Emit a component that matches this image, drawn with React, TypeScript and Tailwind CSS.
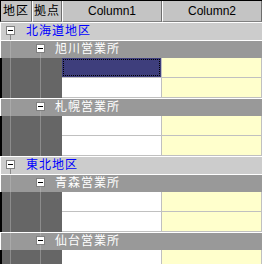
import React from 'react';

type Row =
  | { kind: 'region'; label: string }
  | { kind: 'office'; label: string; first: boolean }
  | { kind: 'data'; selected?: boolean };

const ROWS: Row[] = [
  { kind: 'region', label: '北海道地区' },
  { kind: 'office', label: '旭川営業所', first: true },
  { kind: 'data', selected: true },
  { kind: 'data' },
  { kind: 'office', label: '札幌営業所', first: false },
  { kind: 'data' },
  { kind: 'data' },
  { kind: 'region', label: '東北地区' },
  { kind: 'office', label: '青森営業所', first: true },
  { kind: 'data' },
  { kind: 'data' },
  { kind: 'office', label: '仙台営業所', first: false },
  { kind: 'data' },
];

const JP = "font-['Liberation_Sans','Noto_Sans_CJK_JP',sans-serif]";

// small "minus" expander box of the tree
const Expander = ({ x }: { x: number }) => (
  <>
    <rect x={x + 0.5} y={3.5} width={8} height={8} fill="#ffffff" stroke="#808080" />
    <line x1={x + 2} y1={7.5} x2={x + 7} y2={7.5} stroke="#000000" />
  </>
);

const HeaderCell = ({ w, children, first }: { w: string; children: React.ReactNode; first?: boolean }) => (
  <div
    className={`${w} h-full flex items-center justify-center bg-[#c4c4c4] border-r border-b border-r-[#6e6e6e] border-b-[#808080] ${
      first ? 'border-l border-l-black' : 'border-l border-l-white'
    }`}
  >
    {children}
  </div>
);

const RegionRow = ({ label }: { label: string }) => (
  <div className="flex h-[18px] bg-[#cccccc] border-t border-t-white border-l border-l-white">
    <svg width="25" height="17" className="shrink-0">
      <line x1={9.5} y1={12} x2={9.5} y2={17} stroke="#8a8a8a" />
      <Expander x={5} />
    </svg>
    <span className={`${JP} text-[12px] tracking-[1px] leading-[17px] text-[#0000ff]`}>{label}</span>
  </div>
);

const OfficeRow = ({ label, first }: { label: string; first: boolean }) => (
  <div className="flex h-[18px] bg-[#999999] border-t border-t-white border-l border-l-white">
    <svg width="54" height="17" className="shrink-0">
      <line x1={9.5} y1={0} x2={9.5} y2={17} stroke="#a9a9a9" />
      {!first && <line x1={39.5} y1={0} x2={39.5} y2={3} stroke="#a9a9a9" />}
      <line x1={39.5} y1={12} x2={39.5} y2={17} stroke="#a9a9a9" />
      <Expander x={35} />
    </svg>
    <span className={`${JP} text-[12px] tracking-[1px] leading-[17px] text-white`}>{label}</span>
  </div>
);

const DataRow = ({ selected }: { selected?: boolean }) => (
  <div className="flex h-[20px]">
    {/* row header area with tree guide lines */}
    <div className="flex w-[62px] h-full bg-[#666666]">
      <div className="w-[10px] h-full border-l-2 border-l-black" />
      <div className="w-px h-full bg-[#8c8c8c]" />
      <div className="w-[29px] h-full" />
      <div className="w-px h-full bg-[#8c8c8c]" />
    </div>
    <div className="w-[100px] h-full bg-white border-r border-b border-[#c0c0c0]">
      {selected && (
        <div className="h-full bg-[#3e3e7c] p-px">
          <div className="h-full border border-dotted border-black" />
        </div>
      )}
    </div>
    <div className="w-[100px] h-full bg-[#ffffcc] border-r border-b border-[#c0c0c0]" />
  </div>
);

export default function App() {
  return (
    <div className="w-[262px] h-[264px] overflow-hidden bg-white">
      <div className="flex h-[22px] border-t border-t-black">
        <HeaderCell w="w-[32px]" first>
          <span className={`${JP} text-[12px] tracking-[1px] text-black`}>地区</span>
        </HeaderCell>
        <HeaderCell w="w-[30px]">
          <span className={`${JP} text-[12px] tracking-[1px] text-black`}>拠点</span>
        </HeaderCell>
        <HeaderCell w="w-[100px]">
          <span className="font-['Liberation_Sans',sans-serif] text-[12px] text-black">Column1</span>
        </HeaderCell>
        <HeaderCell w="w-[100px]">
          <span className="font-['Liberation_Sans',sans-serif] text-[12px] text-black">Column2</span>
        </HeaderCell>
      </div>
      {ROWS.map((r, i) =>
        r.kind === 'region' ? (
          <RegionRow key={i} label={r.label} />
        ) : r.kind === 'office' ? (
          <OfficeRow key={i} label={r.label} first={r.first} />
        ) : (
          <DataRow key={i} selected={r.selected} />
        )
      )}
    </div>
  );
}
